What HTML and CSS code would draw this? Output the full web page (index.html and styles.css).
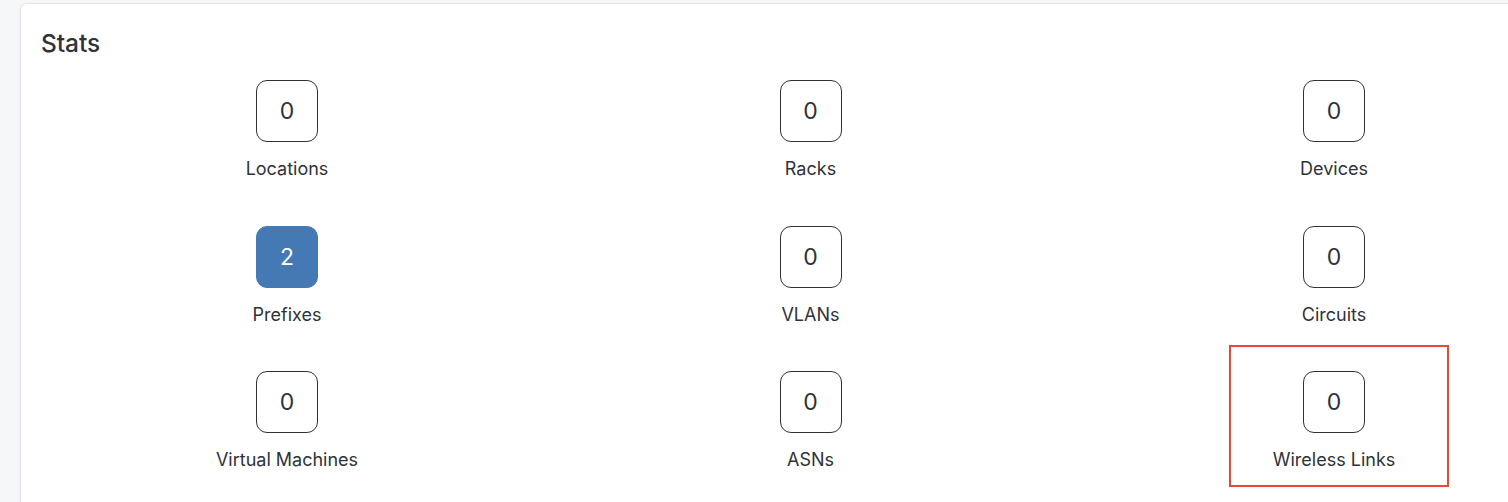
FILE: index.html
```html
<!DOCTYPE html>
<html>
<head>
<meta charset="utf-8">
<link rel="stylesheet" href="styles.css">
</head>
<body>
<div class="page">
  <section class="card">
    <h2 class="card-title">Stats</h2>
    <div class="stats">
      <div class="stat"><div class="count">0</div><div class="label">Locations</div></div>
      <div class="stat"><div class="count">0</div><div class="label">Racks</div></div>
      <div class="stat"><div class="count">0</div><div class="label">Devices</div></div>
      <div class="stat"><div class="count filled">2</div><div class="label">Prefixes</div></div>
      <div class="stat"><div class="count">0</div><div class="label">VLANs</div></div>
      <div class="stat"><div class="count">0</div><div class="label">Circuits</div></div>
      <div class="stat"><div class="count">0</div><div class="label">Virtual Machines</div></div>
      <div class="stat"><div class="count">0</div><div class="label">ASNs</div></div>
      <div class="stat highlighted"><div class="count">0</div><div class="label">Wireless Links</div><span class="mark"></span></div>
    </div>
  </section>
</div>
</body>
</html>
```

FILE: styles.css
```css
html, body {
  margin: 0;
  padding: 0;
  background: #f6f7f9;
}
body {
  width: 1508px;
  height: 502px;
  overflow: hidden;
  font-family: Inter, "Noto Sans", "Liberation Sans", sans-serif;
  color: #2f3338;
}
.page {
  width: 1508px;
  height: 502px;
  overflow: hidden;
  box-sizing: border-box;
  padding: 3px 0 0 20px;
}
.card {
  width: 1500px;
  height: 520px;
  box-sizing: border-box;
  background: #fff;
  border: 1px solid #e3e5e8;
  border-radius: 7px;
  box-shadow: -1px 0 2px rgba(0,0,0,0.04);
  padding: 0 20px;
}
.card-title {
  margin: 0;
  padding-top: 25px;
  height: 52px;
  box-sizing: border-box;
  font-size: 24.5px;
  font-weight: 500;
  line-height: 28px;
  letter-spacing: -0.1px;
  color: #2f3338;
}
.stats {
  display: grid;
  grid-template-columns: repeat(3, 492px);
  column-gap: 31.5px;
  row-gap: 45.5px;
  padding-top: 24px;
}
.stat {
  position: relative;
  display: flex;
  flex-direction: column;
  align-items: center;
  height: 100px;
}
.count {
  width: 62px;
  height: 62px;
  box-sizing: border-box;
  border: 1px solid #2f3338;
  border-radius: 11px;
  display: flex;
  align-items: center;
  justify-content: center;
  font-size: 23px;
  color: #2f3338;
}
.count.filled {
  background: #4579b3;
  border-color: #4579b3;
  color: #fff;
}
.label {
  margin-top: 16px;
  font-size: 18px;
  line-height: 22px;
  white-space: nowrap;
}
.mark {
  position: absolute;
  left: 141px;
  top: -26px;
  width: 220px;
  height: 142px;
  box-sizing: border-box;
  border: 2px solid #e8473a;
}
```
